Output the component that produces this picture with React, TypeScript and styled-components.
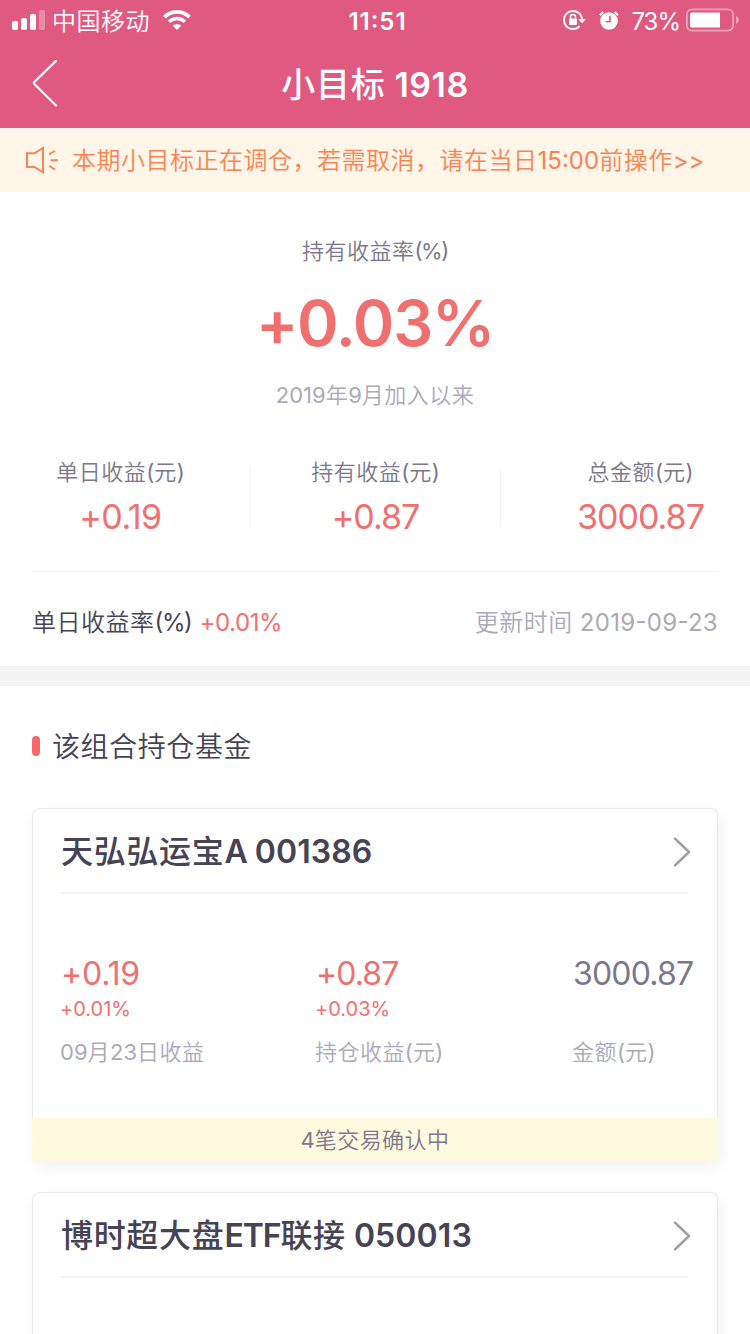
import React from "react";
import styled, { createGlobalStyle } from "styled-components";

const color = {
  brand: "#df5981",
  noticeBg: "#fff5e8",
  orange: "#f98453",
  red: "#f07070",
  accent: "#f86669",
  ink: "#454354",
  gray: "#7b788b",
  light: "#aba9bc",
  line: "#f4f4f4",
};

const GlobalStyle = createGlobalStyle`
  * { box-sizing: border-box; }
  body {
    margin: 0;
    background: #fff;
    font-family: Inter, "Noto Sans CJK SC", sans-serif;
    overflow: hidden;
  }
`;

const Page = styled.main`
  width: 750px;
  height: 1334px;
  overflow: hidden;
  background: #fff;
`;

/* Text with separate tracking for Han, letter and figure runs. */
const Line = styled.span<{ $size: number; $color: string; $weight: number; $h: number; $low: boolean }>`
  display: block;
  white-space: pre;
  font-size: ${(p) => p.$size}px;
  line-height: ${(p) => p.$h}px;
  font-weight: ${(p) => p.$weight};
  color: ${(p) => p.$color};
  font-feature-settings: "calt" ${(p) => (p.$low ? 0 : 1)};
`;
const Han = styled.span<{ $weight: number }>`
  letter-spacing: 0.021em;
  font-weight: ${(p) => p.$weight};
`;
const Latin = styled.span<{ $track: number }>`
  letter-spacing: ${(p) => p.$track}px;
`;

type TextProps = {
  size: number;
  color: string;
  weight?: number;
  hanWeight?: number;
  h?: number;
  track?: number;
  letterTrack?: number;
  children: string;
};
function Text({ size, color: c, weight = 400, hanWeight = 350, h = 32, track = 0, letterTrack, children }: TextProps) {
  const runs = children.match(/[\u3000-\u9fff\uff00-\uffef]+|[A-Z]+|[^A-Z\u3000-\u9fff\uff00-\uffef]+/g) ?? [];
  return (
    <Line $size={size} $color={c} $weight={weight} $h={h} $low={children.startsWith("+")}>
      {runs.map((run, i) =>
        /[\u3000-\uffef]/.test(run) ? (
          <Han key={i} $weight={hanWeight}>{run}</Han>
        ) : (
          <Latin key={i} $track={/[A-Z]/.test(run) ? letterTrack ?? track : track}>{run}</Latin>
        )
      )}
    </Line>
  );
}

const Header = styled.header`
  height: 128px;
  background: ${color.brand};
  color: #fff;
`;
const StatusBar = styled.div`
  display: grid;
  grid-template-columns: 1fr auto 1fr;
  align-items: center;
  height: 40px;
`;
const StatusLeft = styled.div`
  display: flex;
  align-items: center;
  padding-left: 12px;
`;
const Clock = styled.div`
  padding: 3px 0 0 5px;
`;
const Carrier = styled.div`
  margin: 0 13px 0 7px;
  padding-top: 3px;
`;
const StatusRight = styled.div`
  display: flex;
  align-items: center;
  justify-content: flex-end;
  padding-right: 11px;
`;
const StatusIcons = styled.div`
  display: flex;
  align-items: center;
  gap: 13px;
`;
const Percent = styled.div`
  margin: 0 6px 0 12px;
  padding-top: 3px;
`;
const NavBar = styled.div`
  display: grid;
  grid-template-columns: 1fr auto 1fr;
  align-items: center;
  height: 88px;
  padding: 0 32px;
`;
const NavTitle = styled.div`
  padding-top: 1px;
`;
const Notice = styled.div`
  display: flex;
  align-items: center;
  height: 64px;
  padding-left: 25px;
  gap: 13px;
  background: ${color.noticeBg};
`;
const NoticeText = styled.div`
  padding-top: 2px;
`;

const Summary = styled.section`
  height: 474px;
  padding-top: 43px;
`;
const Hero = styled.div`
  display: flex;
  flex-direction: column;
  align-items: center;
`;
const Stats = styled.div`
  display: grid;
  grid-template-columns: 250px 250px 250px;
  margin-top: 45px;
`;
const Stat = styled.div<{ $left?: number; $right?: number; $divider?: boolean }>`
  position: relative;
  display: flex;
  flex-direction: column;
  align-items: center;
  gap: 9px;
  padding: 0 ${(p) => p.$right ?? 0}px 0 ${(p) => p.$left ?? 0}px;
  &::after {
    content: "";
    display: ${(p) => (p.$divider ? "block" : "none")};
    position: absolute;
    top: 11px;
    right: -1px;
    width: 1px;
    height: 60px;
    background: ${color.line};
  }
`;
const DailyRow = styled.div`
  display: flex;
  justify-content: space-between;
  margin: 34px 32px 0;
  padding-top: 35px;
  border-top: 1px solid ${color.line};
`;
const Inline = styled.div`
  display: flex;
  gap: 8px;
`;
const Separator = styled.div`
  height: 20px;
  background: #f4f4f4;
`;

const SectionTitle = styled.h2`
  display: flex;
  align-items: center;
  gap: 12px;
  height: 122px;
  margin: 0;
  padding: 0 0 2px 32px;
`;
const SectionText = styled.div`
  padding-top: 2px;
`;
const Accent = styled.i`
  width: 8px;
  height: 20px;
  border-radius: 4px;
  background: ${color.accent};
`;
const Cards = styled.div`
  display: flex;
  flex-direction: column;
  gap: 30px;
  padding: 0 32px;
`;
const Card = styled.article`
  height: 354px;
  border-radius: 8px 8px 0 0;
  box-shadow: 3px 5px 18px rgba(0, 0, 0, 0.055);
`;
const CardBody = styled.div`
  height: 310px;
  padding: 0 29px 0 28px;
  border: 1px solid #e8e8e8;
  border-bottom: 0;
  border-radius: 8px 8px 0 0;
  background: #fff;
`;
const CardHead = styled.div`
  display: flex;
  justify-content: space-between;
  align-items: center;
  height: 85px;
  padding-top: 2px;
  border-bottom: 2px solid ${color.line};
`;
const Chevron = styled.svg`
  margin-right: -3px;
`;
const Metrics = styled.div`
  display: grid;
  grid-template-columns: 255px 257px auto;
  padding-top: 64px;
  margin-left: -1px;
`;
const Metric = styled.div`
  display: flex;
  flex-direction: column;
`;
const MetricValue = styled.div`
  padding-left: 1px;
`;
const Sub = styled.div`
  height: 24px;
  margin: 7px 0 15px;
`;
const Pending = styled.footer`
  display: flex;
  justify-content: center;
  align-items: center;
  height: 44px;
  background: #fff9e0;
`;

const Signal = () => (
  <svg width="33" height="20" viewBox="0 0 33 20" fill="#fff">
    <rect x="0" y="11" width="6" height="9" rx="1.8" />
    <rect x="9" y="8" width="6" height="12" rx="1.8" />
    <rect x="18" y="4" width="6" height="16" rx="1.8" />
    <rect x="27" y="0" width="6" height="20" rx="1.8" opacity=".3" />
  </svg>
);
const Wifi = () => (
  <svg width="28" height="20" viewBox="0 0 28 20" fill="none" stroke="#fff">
    <path d="M1.4 7.2a17.8 17.8 0 0 1 25.2 0" strokeWidth="3.8" />
    <path d="M6 11.8a11.3 11.3 0 0 1 16 0" strokeWidth="3.6" />
    <path d="M14 20l-4.3-4.3a6.1 6.1 0 0 1 8.6 0z" fill="#fff" stroke="none" />
  </svg>
);
const RotationLock = () => (
  <svg width="23" height="20" viewBox="0 0 23 20" fill="none">
    <path d="M19 10A9 9 0 1 0 16.6 16.1" stroke="#fff" strokeWidth="1.9" />
    <path d="M15.2 9h7.8l-3.9 4.2z" fill="#fff" />
    <rect x="6" y="8.6" width="8" height="6.4" rx="1" fill="#fff" />
    <path d="M7.5 9V7a2.5 2.5 0 0 1 5 0v2" stroke="#fff" strokeWidth="1.5" />
  </svg>
);
const Alarm = () => (
  <svg width="20" height="19" viewBox="0 0 20 19" fill="none">
    <circle cx="10" cy="10" r="8.8" fill="#fff" />
    <path d="M.9 4.2L4.2 1M19.1 4.2L15.8 1" stroke="#fff" strokeWidth="2" />
    <path d="M10.9 4.7v6.1H6.8" stroke={color.brand} strokeWidth="1.6" />
  </svg>
);
const Battery = () => (
  <svg width="53" height="24" viewBox="0 0 53 24" fill="none">
    <rect x=".9" y="1.4" width="46.2" height="21.2" rx="5" stroke="#fff" strokeOpacity=".45" strokeWidth="1.8" />
    <path d="M6 4.5h28v15H6a2 2 0 0 1-2-2v-11a2 2 0 0 1 2-2z" fill="#fff" />
    <path d="M50 8q3 1.5 3 4t-3 4z" fill="#fff" fillOpacity=".45" />
  </svg>
);
const Back = () => (
  <svg width="26" height="48" viewBox="0 0 26 48" fill="none" stroke="#fff" strokeWidth="2.2" strokeLinecap="round" strokeLinejoin="round">
    <path d="M24 .9L2.6 21.7q-1.3 1.3 0 2.6L24 45.5" />
  </svg>
);
const Speaker = () => (
  <svg width="34" height="28" viewBox="0 0 34 28" fill="none" stroke={color.orange} strokeWidth="2">
    <path d="M2 7.3h7.5L18 2v24.4L9.5 21H2z" />
    <path d="M24 8.400l6-3.400M25.500 14.200H33M24 20l6 3.400" />
  </svg>
);

type Metric = { value: string; track: number; sub?: string; label: string; muted?: boolean };
type Fund = { name: string; metrics: Metric[]; pending?: string };
const funds: Fund[] = [
  {
    name: "天弘弘运宝A 001386",
    metrics: [
      { value: "+0.19", track: -0.2, sub: "+0.01%", label: "09月23日收益" },
      { value: "+0.87", track: -0.9, sub: "+0.03%", label: "持仓收益(元)" },
      { value: "3000.87", track: -0.8, label: "金额(元)", muted: true },
    ],
    pending: "4笔交易确认中",
  },
  { name: "博时超大盘ETF联接 050013", metrics: [] },
];

function FundCard({ fund }: { fund: Fund }) {
  return (
    <Card>
      <CardBody>
        <CardHead>
          <Text size={32} color={color.ink} weight={600} hanWeight={500} h={40} track={0.1} letterTrack={-1.1}>
            {fund.name}
          </Text>
          <Chevron width="18" height="30" viewBox="0 0 18 30" fill="none" stroke="#a0a0a0" strokeWidth="2.5" strokeLinecap="round" strokeLinejoin="round">
            <path d="M2 1.7L16 15L2 28.3" />
          </Chevron>
        </CardHead>
        <Metrics>
          {fund.metrics.map((m) => (
            <Metric key={m.label}>
              <MetricValue>
                <Text size={32} color={m.muted ? color.gray : color.red} track={m.track}>{m.value}</Text>
              </MetricValue>
              <Sub>{m.sub && <Text size={20} h={24} color={color.red}>{m.sub}</Text>}</Sub>
              <Text size={22} color={color.light}>{m.label}</Text>
            </Metric>
          ))}
        </Metrics>
      </CardBody>
      {fund.pending && (
        <Pending>
          <Text size={22} color={color.gray}>{fund.pending}</Text>
        </Pending>
      )}
    </Card>
  );
}

export default function App() {
  return (
    <Page>
      <GlobalStyle />
      <Header>
        <StatusBar>
          <StatusLeft>
            <Signal />
            <Carrier><Text size={24} color="#fff">中国移动</Text></Carrier>
            <Wifi />
          </StatusLeft>
          <Clock><Text size={24} color="#fff" weight={600} track={1}>11:51</Text></Clock>
          <StatusRight>
            <StatusIcons>
              <RotationLock />
              <Alarm />
            </StatusIcons>
            <Percent><Text size={24} color="#fff" track={-1}>73%</Text></Percent>
            <Battery />
          </StatusRight>
        </StatusBar>
        <NavBar>
          <Back />
          <NavTitle>
            <Text size={34} color="#fff" weight={600} hanWeight={500} h={44} track={0.5}>小目标 1918</Text>
          </NavTitle>
        </NavBar>
      </Header>
      <Notice>
        <Speaker />
        <NoticeText>
          <Text size={24} color={color.orange}>本期小目标正在调仓，若需取消，请在当日15:00前操作&gt;&gt;</Text>
        </NoticeText>
      </Notice>
      <Summary>
        <Hero>
          <Text size={22} color={color.gray} track={-1.4}>持有收益率(%)</Text>
          <Text size={63} h={112} weight={600} color={color.red} track={-1.2}>+0.03%</Text>
          <Text size={22} color={color.light}>2019年9月加入以来</Text>
        </Hero>
        <Stats>
          <Stat $right={9} $divider>
            <Text size={22} color={color.gray}>单日收益(元)</Text>
            <Text size={34} h={40} color={color.red} track={-0.5}>+0.19</Text>
          </Stat>
          <Stat $left={1} $divider>
            <Text size={22} color={color.gray}>持有收益(元)</Text>
            <Text size={34} h={40} color={color.red} track={-1}>+0.87</Text>
          </Stat>
          <Stat $left={31}>
            <Text size={22} color={color.gray}>总金额(元)</Text>
            <Text size={34} h={40} color={color.red} track={-1}>3000.87</Text>
          </Stat>
        </Stats>
        <DailyRow>
          <Inline>
            <Text size={24} color={color.ink} track={-1.4}>单日收益率(%)</Text>
            <Text size={24} color={color.red} track={-0.4}>+0.01%</Text>
          </Inline>
          <Text size={24} color={color.light} track={0.3}>更新时间 2019-09-23</Text>
        </DailyRow>
      </Summary>
      <Separator />
      <SectionTitle>
        <Accent />
        <SectionText><Text size={28} color={color.ink}>该组合持仓基金</Text></SectionText>
      </SectionTitle>
      <Cards>
        {funds.map((f) => <FundCard key={f.name} fund={f} />)}
      </Cards>
    </Page>
  );
}
